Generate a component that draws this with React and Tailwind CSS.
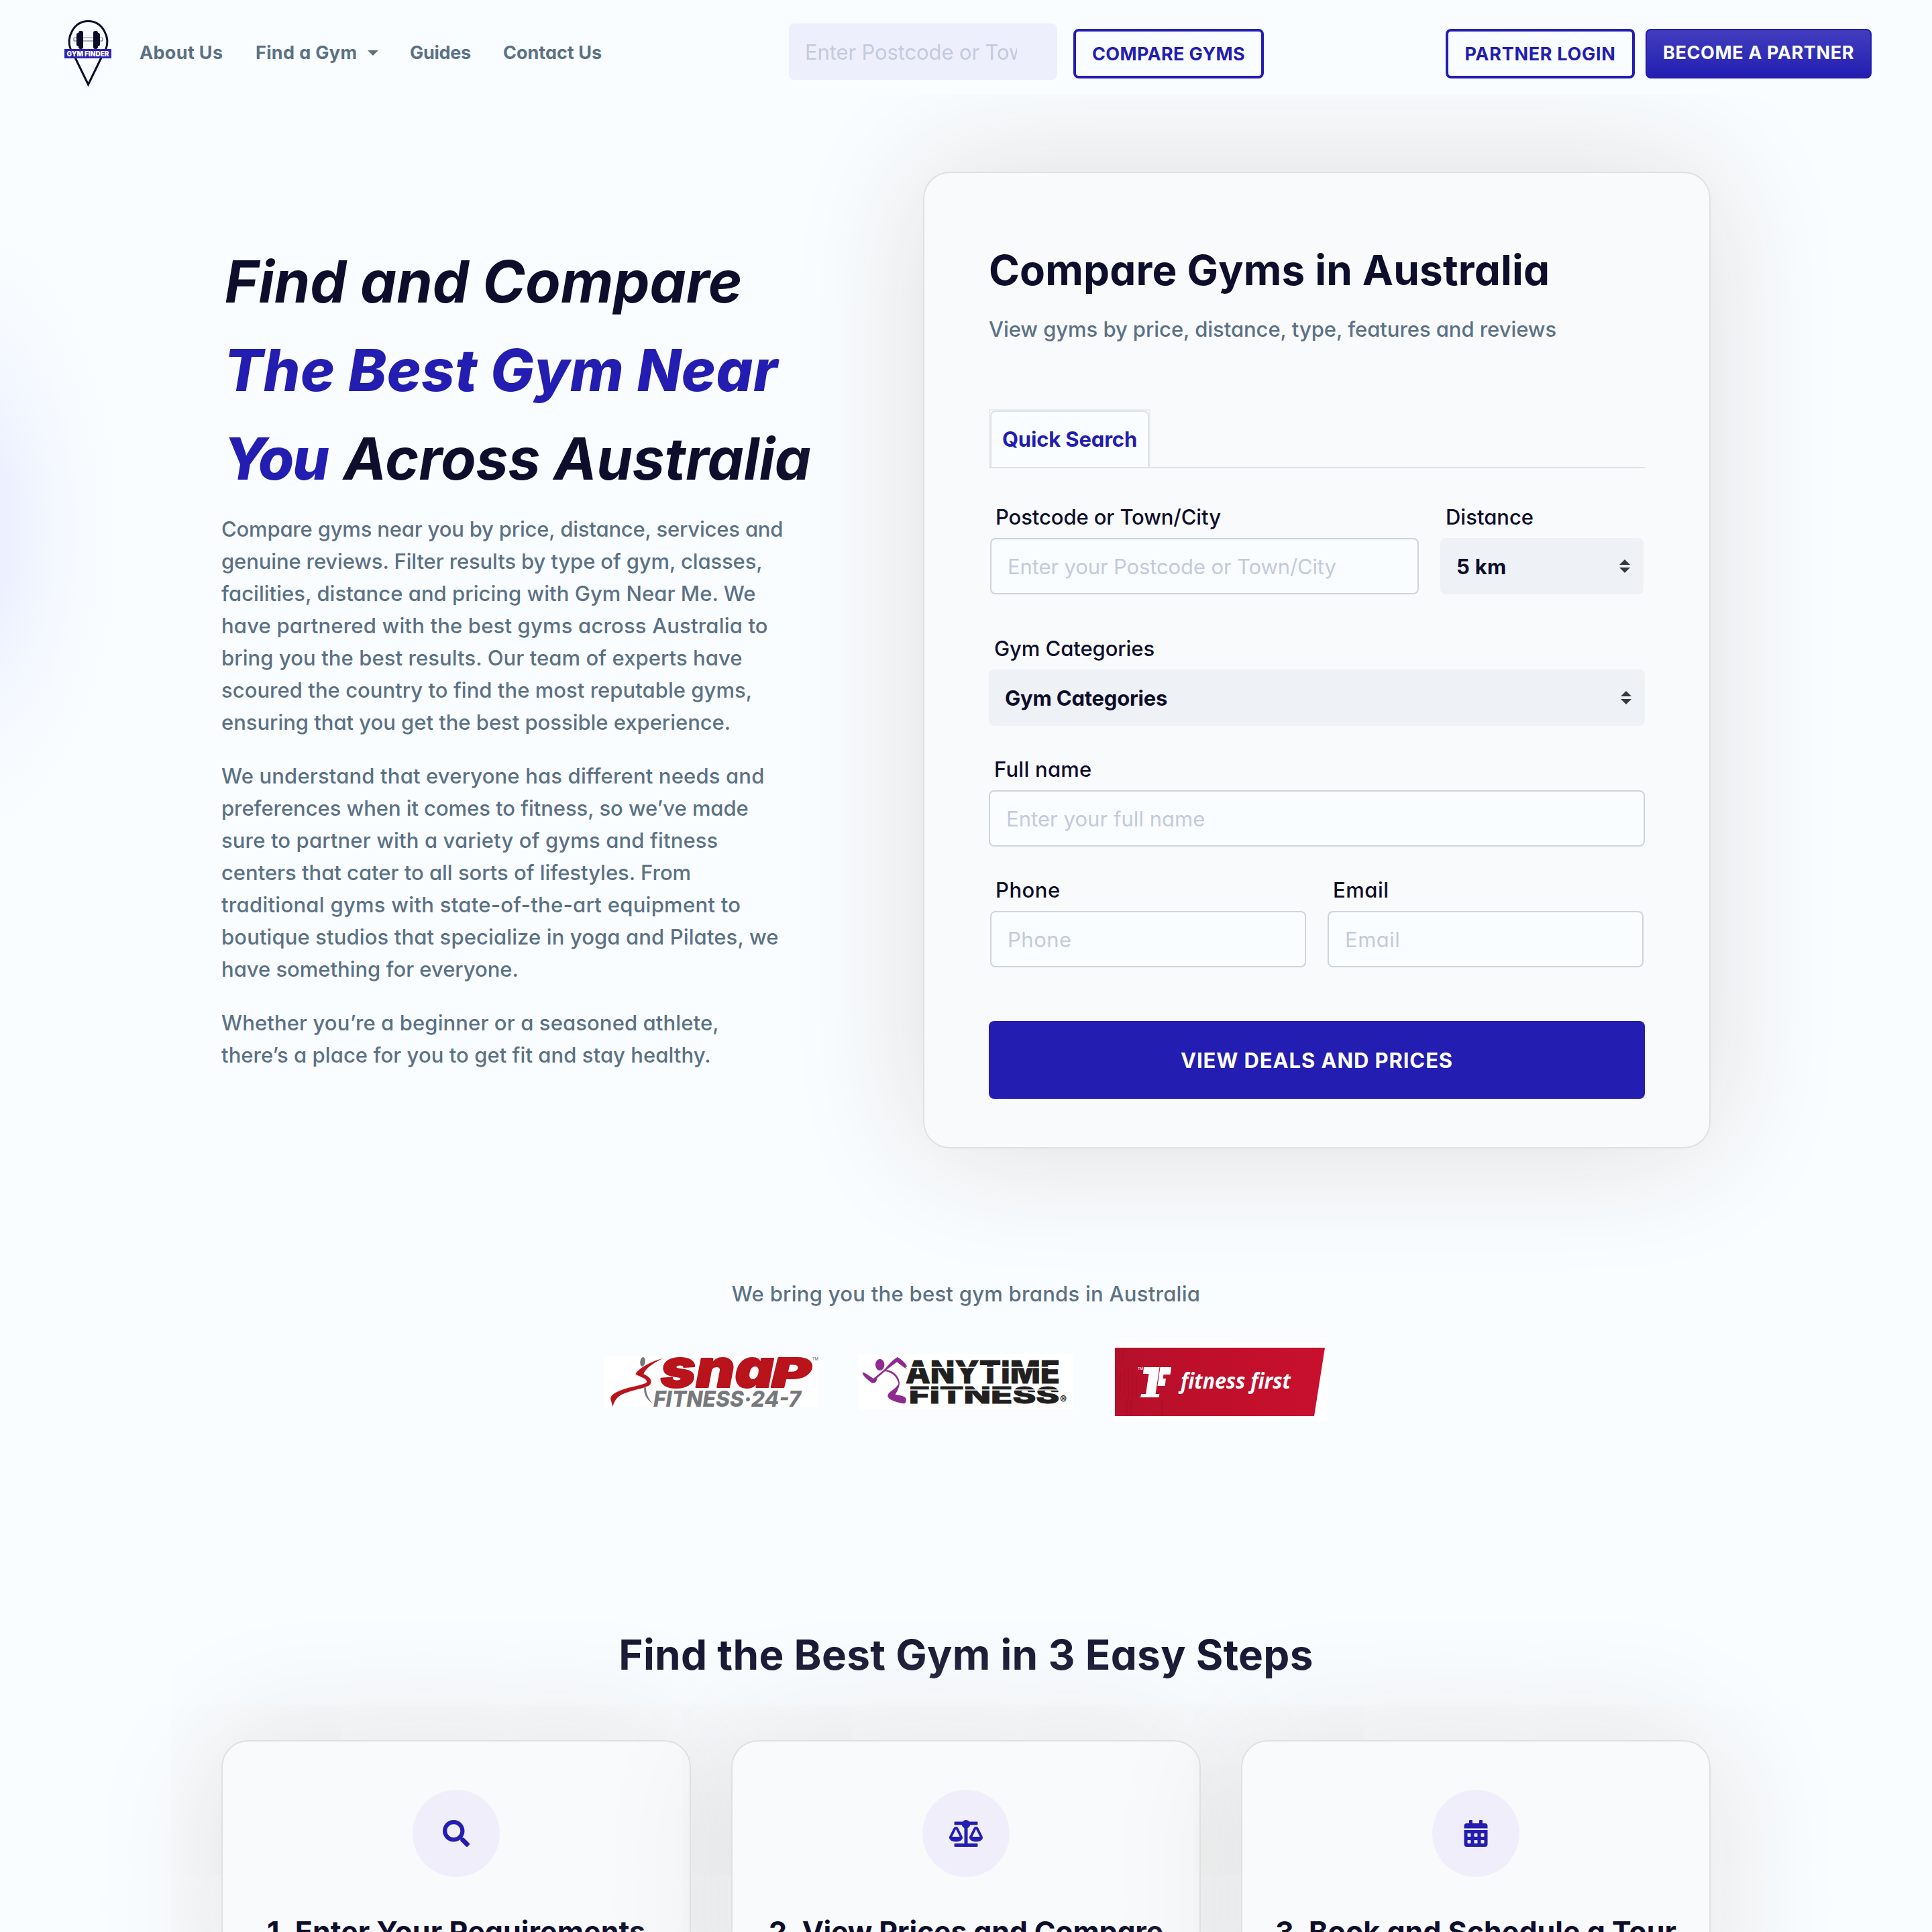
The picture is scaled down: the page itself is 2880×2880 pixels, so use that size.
import React from "react";
import { FaSearch, FaBalanceScale, FaCalendarAlt } from "react-icons/fa";

const paragraphs = [
  [
    ["Compare gyms near you by price, distance, services and", "tracking-[-0.19px]"],
    ["genuine reviews. Filter results by type of gym, classes,", "tracking-[-0.13px]"],
    ["facilities, distance and pricing with Gym Near Me. We", "tracking-[0.03px]"],
    ["have partnered with the best gyms across Australia to", "tracking-[0.18px]"],
    ["bring you the best results. Our team of experts have", "tracking-[0.08px]"],
    ["scoured the country to find the most reputable gyms,", "tracking-[0.04px]"],
    ["ensuring that you get the best possible experience.", "tracking-[-0.03px]"],
  ],
  [
    ["We understand that everyone has different needs and", "tracking-[0.16px]"],
    ["preferences when it comes to fitness, so we’ve made", "tracking-[-0.06px]"],
    ["sure to partner with a variety of gyms and fitness", "tracking-[0.14px]"],
    ["centers that cater to all sorts of lifestyles. From", "tracking-[-0.02px]"],
    ["traditional gyms with state-of-the-art equipment to", "tracking-[0.28px]"],
    ["boutique studios that specialize in yoga and Pilates, we", "tracking-[0.12px]"],
    ["have something for everyone.", "tracking-[-0.02px]"],
  ],
  [
    ["Whether you’re a beginner or a seasoned athlete,", "tracking-[0.11px]"],
    ["there’s a place for you to get fit and stay healthy.", "tracking-[0.06px]"],
  ],
];

function Logo() {
  return (
    <svg viewBox="0 0 70 102" className="h-[102px] w-[70px] shrink-0">
      <path d="M9.500 46C2 28 14 3.500 35.500 3.500S69 28 61.500 46M16 58L35.500 98L55 58" fill="none" stroke="#0d0e2b" strokeWidth="3" />
      <path d="M14 28.500h43v4.500H14z" fill="#fafdff" stroke="#5b5d76" strokeWidth="1" />
      <rect x="18" y="21" width="8" height="20" rx="3" fill="#0d0e2b" />
      <rect x="21" y="18" width="7" height="27" rx="3" fill="#0d0e2b" />
      <rect x="43" y="18" width="7" height="27" rx="3" fill="#0d0e2b" />
      <rect x="45" y="21" width="8" height="20" rx="3" fill="#0d0e2b" />
      <rect x="0" y="45" width="70" height="14" fill="#2d25b5" />
      <text x="3.500" y="55.500" fontFamily="Inter" fontWeight="900" fontSize="10" fill="#fff" textLength="63" lengthAdjust="spacingAndGlyphs">GYM FINDER</text>
    </svg>
  );
}

function SnapLogo() {
  return (
    <svg viewBox="0 63 960 225" className="h-[75px] w-[320px] bg-white [font-feature-settings:normal]">
      <ellipse cx="174" cy="87" rx="11" ry="21" transform="rotate(8 174 87)" fill="#77787b" />
      <path d="M264 72C222 82 158 112 142 142C160 154 190 160 193 176C190 190 120 196 72 216C40 230 24 244 33 262L40 288C52 250 66 236 110 222C150 208 196 202 208 188C218 170 206 154 178 142C186 116 226 90 264 72Z" fill="#b9131c" />
      <path d="M182 199C176 226 190 258 219 273C200 252 190 232 188 201Z" fill="#77787b" />
      <g fontFamily="Inter" fontStyle="italic" fill="#b9131c" stroke="#b9131c" strokeWidth="6" strokeLinejoin="round">
        <text x="254" y="201" fontWeight="900" fontSize="238" textLength="506" lengthAdjust="spacingAndGlyphs">sna</text>
        <text x="750" y="201" fontWeight="900" fontSize="182" textLength="176" lengthAdjust="spacingAndGlyphs">P</text>
      </g>
      <text x="222" y="287" fontFamily="Inter" fontStyle="italic" fontWeight="800" fontSize="99" fill="#77787b" textLength="660" lengthAdjust="spacingAndGlyphs">FITNESS·24-7</text>
      <text x="932" y="80" fontFamily="Inter" fontSize="18" fill="#77787b" textLength="28" lengthAdjust="spacingAndGlyphs">TM</text>
    </svg>
  );
}

function AnytimeLogo() {
  return (
    <svg viewBox="1140 51 960 249" className="h-[83px] w-[320px] bg-white">
      <g fill="#8e2a90">
        <ellipse cx="1235" cy="100" rx="20" ry="26" />
        <path d="M1157 137C1156 130 1170 138 1206 162L1256 121C1274 100 1290 80 1313 66C1330 74 1350 92 1358 112C1358 122 1348 118 1311 88L1263 124C1290 124 1322 150 1323 182C1322 204 1310 220 1304 234C1320 236 1352 240 1352 254C1352 272 1348 276 1330 272C1300 266 1268 254 1270 238C1274 218 1300 216 1318 186C1316 164 1296 134 1258 129L1224 158C1218 182 1210 184 1200 182C1186 172 1160 152 1157 137Z" />
      </g>
      <g fontFamily="Inter" fontWeight="800" fill="#221f20" stroke="#221f20" strokeWidth="3">
        <text x="1350" y="182" fontSize="138" textLength="690" lengthAdjust="spacingAndGlyphs">ANYTIME</text>
        <text x="1364" y="273" fontSize="103" textLength="674" lengthAdjust="spacingAndGlyphs">FITNESS</text>
      </g>
      <path d="M1350 112h690M1362 213h680" stroke="#fff" strokeWidth="5" />
      <text x="2040" y="274" fontFamily="Inter" fontWeight="700" fontSize="46" fill="#221f20">®</text>
    </svg>
  );
}

function FitnessFirstLogo() {
  return (
    <svg viewBox="-2 0 320 117" className="h-[117px] w-[320px] bg-white">
      <defs>
        <linearGradient id="ff" x1="0" x2="1" y1="0" y2="0">
          <stop offset="0" stopColor="#b5102b" />
          <stop offset="0.6" stopColor="#c20f2b" />
          <stop offset="1" stopColor="#c8102e" />
        </linearGradient>
      </defs>
      <path d="M0 8h313l-16 102H0z" fill="url(#ff)" />
      <path d="M8 44v30M14 40v38M20 38v44M26 38v44M32 48v34M6 10v20M12 10v20M18 84v24M24 86v22M70 86v22" stroke="#9d0d24" strokeWidth="1" opacity="0.6" />
      <path d="M43 37H66.500L60.500 77H66.500L65.500 82H38L39 77H46L50.500 47H42Z" fill="#fff" />
      <path d="M67.500 37H84L82.500 48H72.500L71.500 54H76L74.500 65H63.500Z" fill="#fff" />
      <text x="34" y="41" fontFamily="Inter" fontSize="5" fill="#fff">TM</text>
      <text x="98" y="69" fontFamily="Open Sans" fontStyle="italic" fontWeight="700" fontSize="33" fill="#fff" textLength="164" lengthAdjust="spacingAndGlyphs">fitness first</text>
    </svg>
  );
}

function Sorter() {
  return (
    <svg viewBox="0 0 16 20" className="h-5 w-4 shrink-0">
      <path d="M8 0L16 8H0ZM0 12H16L8 20Z" fill="#343a40" />
    </svg>
  );
}

function Field({ label, labelTrack, placeholder, track, className }) {
  return (
    <div className={className}>
      <div className={"h-12 pl-2 leading-[48px] " + labelTrack}>{label}</div>
      <div className={"mt-[7px] flex h-[84px] items-center rounded-lg border-2 border-[#ced4da] bg-[#fafdff] pt-[2px] pl-6 font-normal text-[#c3cadd] " + track}>
        {placeholder}
      </div>
    </div>
  );
}

function Select({ label, labelTrack, value, track, className }) {
  return (
    <div className={className}>
      <div className={"h-12 pl-2 leading-[48px] " + labelTrack}>{label}</div>
      <div className="mt-[7px] flex h-[84px] items-center justify-between rounded-lg bg-[#eef1f6] pr-5 pl-6 font-bold">
        <span className={"pt-[2px] " + track}>{value}</span>
        <Sorter />
      </div>
    </div>
  );
}

function Step({ icon, title, track }) {
  return (
    <div className="relative flex h-[480px] w-[700px] flex-col items-center rounded-[40px] border-2 border-[#dfe0e2] bg-[#f9fafc] pt-[72px] shadow-[0_0_200px_#dcdcdc]">
      <div className="flex size-[130px] items-center justify-center rounded-full bg-[#f0eefa] text-[40px] text-[#231db1]">{icon}</div>
      <div className={"mt-[49px] text-[43px] leading-[64px] font-bold whitespace-nowrap " + track}>{title}</div>
    </div>
  );
}

export default function App() {
  return (
    <div className="relative h-[2880px] w-[2880px] overflow-hidden bg-[#fafdff] font-['Inter',sans-serif] text-[31px] font-medium whitespace-nowrap text-[#0d0e2b] [font-feature-settings:'cv11']">
      <div className="absolute top-[210px] -left-[360px] h-[1160px] w-[600px] bg-[radial-gradient(closest-side,#e9edff_0%,#ecf0ff_22%,#f2f6ff_42%,#f7fbff_62%,#f9fdff_85%,transparent_100%)]" />

      <header className="relative z-10 flex h-[141px] items-start bg-[#fafdff] pl-24 text-[27px] font-bold text-[#5b7185]">
        <div className="pt-[28px]"><Logo /></div>
        <nav className="flex pt-[59px] pl-[42px] leading-[40px]">
          <span className="w-[173px] tracking-[0.34px]">About Us</span>
          <span className="flex w-[230px] items-center gap-4 tracking-[0.35px]">
            Find a Gym
            <svg viewBox="0 0 16 8" className="h-2 w-4"><path d="M0 0h16L8 8z" fill="#5b7185" /></svg>
          </span>
          <span className="w-[139px] tracking-[-0.3px]">Guides</span>
          <span className="w-[426px] tracking-[0px]">Contact Us</span>
        </nav>
        <div className="mt-[35px] h-[84px] w-[400px] rounded-lg bg-[#eeeffd] pl-6">
          <div className="w-[316px] overflow-hidden text-[31px] leading-[86px] font-normal tracking-[-0.12px] text-[#c3cadd]">Enter Postcode or Town/City</div>
        </div>
        <div className="mt-[43px] ml-6 flex h-[74px] w-[284px] items-center justify-center rounded-lg border-4 border-[#231db1] pt-[2px] tracking-[0.34px] text-[#231db1]">COMPARE GYMS</div>
        <div className="mt-[43px] ml-[271px] flex h-[74px] w-[282px] items-center justify-center rounded-lg border-4 border-[#231db1] pt-[2px] tracking-[0.71px] text-[#231db1]">PARTNER LOGIN</div>
        <div className="mt-[43px] ml-4 flex h-[74px] w-[337px] items-center justify-center rounded-lg border-2 border-[#231db1] bg-linear-to-b from-[#423cbd] to-[#231db1] pb-[2px] tracking-[0.6px] text-[#fafdff]">BECOME A PARTNER</div>
      </header>

      <main>
        <section className="flex h-[1764px] items-start pl-[330px]">
          <div className="w-[1046px] pt-[213px]">
            <h1 className="text-[86px] leading-[132px] font-bold italic">
              <div className="pl-[5px]">Find and Compare</div>
              <div className="pl-1 font-extrabold tracking-[0.53px] text-[#231db1]">The Best Gym Near</div>
              <div className="flex items-baseline pl-[3px]">
                <span className="w-[179px] font-extrabold tracking-[-2px] text-[#231db1]">You</span>
                <span className="tracking-[-0.25px]">Across Australia</span>
              </div>
            </h1>
            <div className="flex flex-col gap-8 pt-[15px] leading-[48px] text-[#5b7185]">
              {paragraphs.map((lines, i) => (
                <p key={i}>
                  {lines.map(([line, track]) => (
                    <span key={line} className={"block " + track}>{line}</span>
                  ))}
                </p>
              ))}
            </div>
          </div>

          <div className="relative mt-[115px] h-[1456px] w-[1174px] rounded-[40px] border-2 border-[#dfe0e2] bg-[#f9fafc] px-[96px] pt-[107px] shadow-[0_0_200px_#dcdcdc]">
            <h2 className="text-[62px] leading-[76px] font-bold tracking-[0.18px]">Compare Gyms in Australia</h2>
            <p className="mt-[26px] leading-[48px] tracking-[-0.06px] text-[#5b7185]">View gyms by price, distance, type, features and reviews</p>
            <div className="mt-[95px] flex border-b-2 border-[#dee2e6]">
              <div className="border-2 border-b-0 border-[#e9ecef]">
                <div className="h-[84px] w-[237px] rounded-t-lg border-2 border-b-0 border-[#dee2e6] bg-[#fafdff] text-center leading-[82px] font-bold tracking-[-0.16px] text-[#231db1]">Quick Search</div>
              </div>
            </div>
            <div className="mt-[49px] flex justify-between px-[2px]">
              <Field className="w-[639px]" label="Postcode or Town/City" labelTrack="tracking-[-0.1px]" placeholder="Enter your Postcode or Town/City" track="tracking-[-0.12px]" />
              <Select className="w-[303px]" label="Distance" labelTrack="tracking-[0px]" value="5 km" track="tracking-[0.28px]" />
            </div>
            <Select className="mt-[57px]" label="Gym Categories" labelTrack="tracking-[-0.08px]" value="Gym Categories" track="tracking-[-0.22px]" />
            <Field className="mt-[41px]" label="Full name" labelTrack="tracking-[0.25px]" placeholder="Enter your full name" track="tracking-[0.05px]" />
            <div className="mt-[41px] flex justify-between px-[2px]">
              <Field className="w-[471px]" label="Phone" labelTrack="tracking-[0.5px]" placeholder="Phone" track="tracking-[0.5px]" />
              <Field className="w-[471px]" label="Email" labelTrack="tracking-[0.5px]" placeholder="Email" track="tracking-[0.5px]" />
            </div>
            <div className="mt-20 h-[116px] rounded-lg bg-[#231db1] text-center leading-[118px] font-bold tracking-[0.89px] text-white">VIEW DEALS AND PRICES</div>
          </div>
        </section>

        <section className="flex flex-col items-center">
          <p className="leading-[48px] tracking-[0.27px] text-[#5b7185]">We bring you the best gym brands in Australia</p>
          <div className="mt-[48px] flex h-[117px] items-center gap-[60px]">
            <SnapLogo />
            <AnytimeLogo />
            <FitnessFirstLogo />
          </div>
        </section>

        <section className="pt-[311px]">
          <h2 className="text-center text-[62px] leading-[76px] font-bold tracking-[0.3px]">Find the Best Gym in 3 Easy Steps</h2>
          <div className="mt-[89px] flex justify-between px-[330px]">
            <Step icon={<FaSearch />} title="1. Enter Your Requirements" track="tracking-[0.05px]" />
            <Step icon={<FaBalanceScale className="h-[40px] w-[50px]" />} title="2. View Prices and Compare" track="tracking-[-0.2px]" />
            <Step icon={<FaCalendarAlt />} title="3. Book and Schedule a Tour" track="tracking-[0px]" />
          </div>
        </section>
      </main>
    </div>
  );
}
